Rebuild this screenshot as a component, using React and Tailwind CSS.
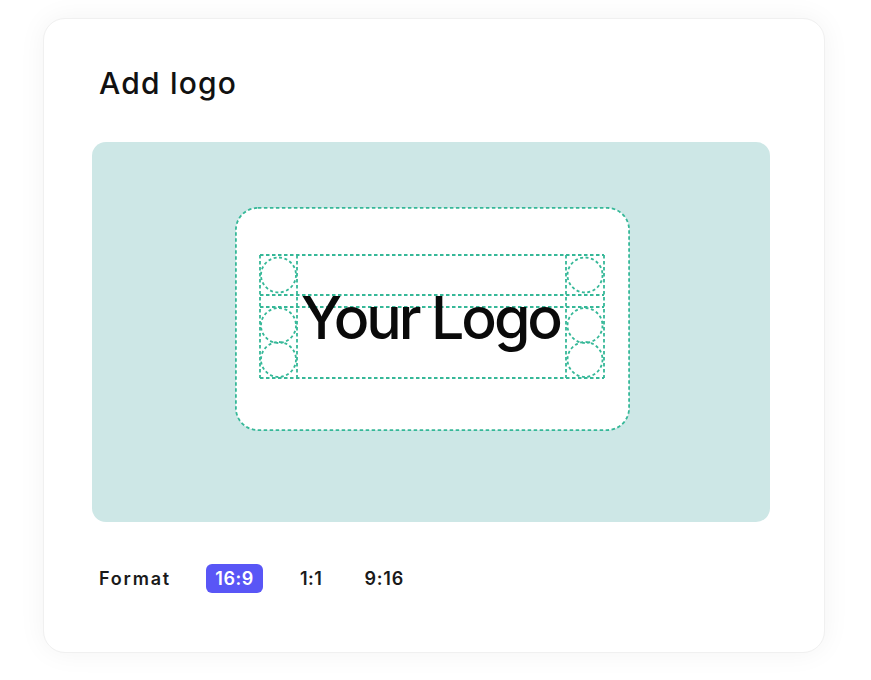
import React from "react";

function LogoIllustration() {
  const c = "#36b898";
  const dash = "3.5 2.5";
  const sw = 1.8;
  const colX = [25, 62, 331, 369];
  const rowY = [48, 88, 100, 171];
  const circles = [];
  [43.5, 350].forEach((cx) => {
    [68, 118.5, 152.5].forEach((cy) => circles.push([cx, cy]));
  });
  return (
    <svg width="397" height="226" viewBox="-1 -1 397 226" className="block">
      <rect x="0.9" y="0.9" width="393.2" height="222.2" rx="22" fill="#ffffff" stroke={c} strokeWidth={sw} strokeDasharray={dash} />
      {rowY.map((y) => (
        <line key={"h" + y} x1={colX[0]} x2={colX[3]} y1={y} y2={y} stroke={c} strokeWidth={sw} strokeDasharray={dash} />
      ))}
      {colX.map((x) => (
        <line key={"v" + x} x1={x} x2={x} y1={rowY[0]} y2={rowY[3]} stroke={c} strokeWidth={sw} strokeDasharray={dash} />
      ))}
      {circles.map(([cx, cy], i) => (
        <circle key={i} cx={cx} cy={cy} r="17.5" fill="none" stroke={c} strokeWidth={sw} strokeDasharray="3 2.5" />
      ))}
      <text
        x="66"
        y="132"
        fontFamily="Inter, 'Noto Sans', sans-serif"
        fontSize="59"
        fontWeight="450"
        textLength="262"
        lengthAdjust="spacing"
        fill="#0a0a0a"
      >
        Your Logo
      </text>
    </svg>
  );
}

export default function App() {
  return (
    <div className="w-[871px] h-[680px] bg-white pt-[18px] pl-[43px]" style={{ fontFamily: "Inter, 'Noto Sans', sans-serif" }}>
      <div className="w-[782px] h-[635px] rounded-[22px] border border-[#f0f0f0] bg-white shadow-[0_0_28px_rgba(0,0,0,0.05)] px-[48px] pt-[46px]">
        <h1 className="ml-[7px] text-[30px] leading-[36px] font-medium text-[#111] tracking-[1.2px]">Add logo</h1>
        <div className="mt-[41px] w-[678px] h-[380px] rounded-[14px] bg-[#cde7e6] flex justify-center pt-[64px] pl-[3px]">
          <LogoIllustration />
        </div>
        <div className="mt-[42px] ml-[7px] flex items-center text-[18px] font-semibold text-[#1a1a1a]">
          <span className="w-[107px] tracking-[1.8px]">Format</span>
          <span className="w-[57px] h-[29px] rounded-[6px] bg-[#5956f6] text-white flex items-center justify-center tracking-[0.5px]">16:9</span>
          <span className="ml-[37px] tracking-[0.5px]">1:1</span>
          <span className="ml-[42px] tracking-[0.8px]">9:16</span>
        </div>
      </div>
    </div>
  );
}
